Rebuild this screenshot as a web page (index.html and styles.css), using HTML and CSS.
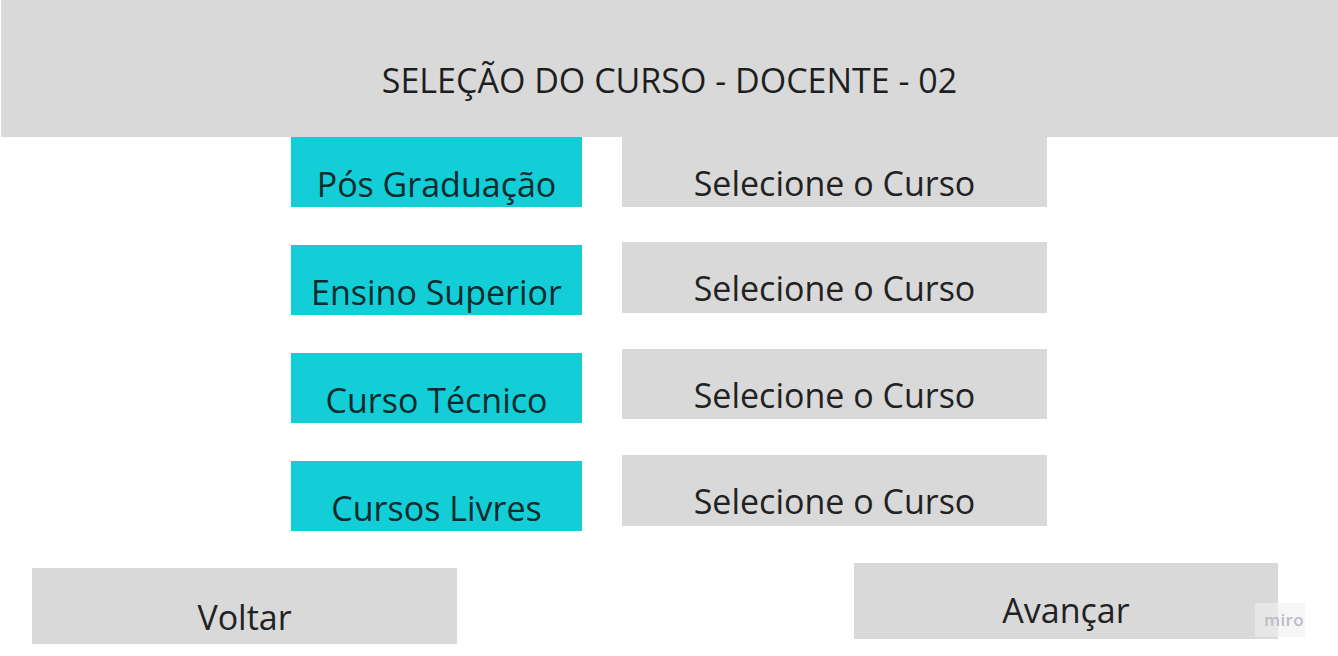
FILE: index.html
```html
<!DOCTYPE html>
<html lang="pt">
<head>
<meta charset="utf-8">
<title>Seleção do Curso - Docente - 02</title>
<link rel="stylesheet" href="styles.css">
</head>
<body>
<header class="topbar">
  <h1 class="title">SELEÇÃO DO CURSO - DOCENTE - 02</h1>
</header>
<main class="choices">
  <div class="col col-levels">
    <div class="level">Pós Graduação</div>
    <div class="level">Ensino Superior</div>
    <div class="level">Curso Técnico</div>
    <div class="level">Cursos Livres</div>
  </div>
  <div class="col col-selects">
    <div class="select">Selecione o Curso</div>
    <div class="select">Selecione o Curso</div>
    <div class="select">Selecione o Curso</div>
    <div class="select">Selecione o Curso</div>
  </div>
</main>
<footer class="actions">
  <div class="btn btn-back">Voltar</div>
  <div class="btn btn-next">Avançar</div>
</footer>
<div class="miro">miro</div>
</body>
</html>
```
FILE: styles.css
```css
html, body {
  margin: 0;
  padding: 0;
  background: #ffffff;
}
body {
  width: 1338px;
  height: 656px;
  overflow: hidden;
  position: relative;
  font-family: "Open Sans", "Noto Sans", sans-serif;
  color: #222222;
}
.topbar {
  margin-left: 1px;
  height: 137px;
  background: #d9d9d9;
  display: flex;
  justify-content: center;
}
.title {
  margin: 0;
  padding-top: 58px;
  font-size: 34px;
  font-weight: 400;
  line-height: 44px;
  color: #1e1e1e;
}
.choices {
  display: flex;
  padding-left: 291px;
  gap: 40px;
}
.col {
  display: flex;
  flex-direction: column;
}
.col-levels {
  width: 291px;
  gap: 37.6px;
}
.col-selects {
  width: 425px;
  gap: 36px;
}
.col-selects .select:first-child {
  margin-bottom: -1px;
}
.level, .select {
  height: 70.4px;
  box-sizing: border-box;
  text-align: center;
  font-size: 34px;
  line-height: 44px;
  padding-top: 25px;
  white-space: nowrap;
}
.level {
  background: #13ced6;
  color: #0f2a2c;
}
.select {
  background: #d9d9d9;
  color: #222222;
  padding-top: 24px;
}
.actions {
  display: flex;
  justify-content: space-between;
  align-items: flex-start;
  padding: 32px 60px 0 32px;
}
.btn {
  width: 425px;
  height: 76px;
  box-sizing: border-box;
  background: #d9d9d9;
  text-align: center;
  font-size: 34px;
  line-height: 44px;
  color: #222222;
}
.btn-back {
  margin-top: 5px;
  padding-top: 27px;
}
.btn-next {
  width: 424px;
  padding-top: 25px;
}
.miro {
  position: absolute;
  left: 1255px;
  top: 603px;
  width: 50px;
  height: 34px;
  box-sizing: border-box;
  padding-left: 9px;
  background: rgba(240, 240, 242, 0.6);
  font-family: "Open Sans", sans-serif;
  font-weight: 600;
  font-size: 17px;
  line-height: 34px;
  color: #bcbcc4;
  letter-spacing: 0.3px;
}
```
